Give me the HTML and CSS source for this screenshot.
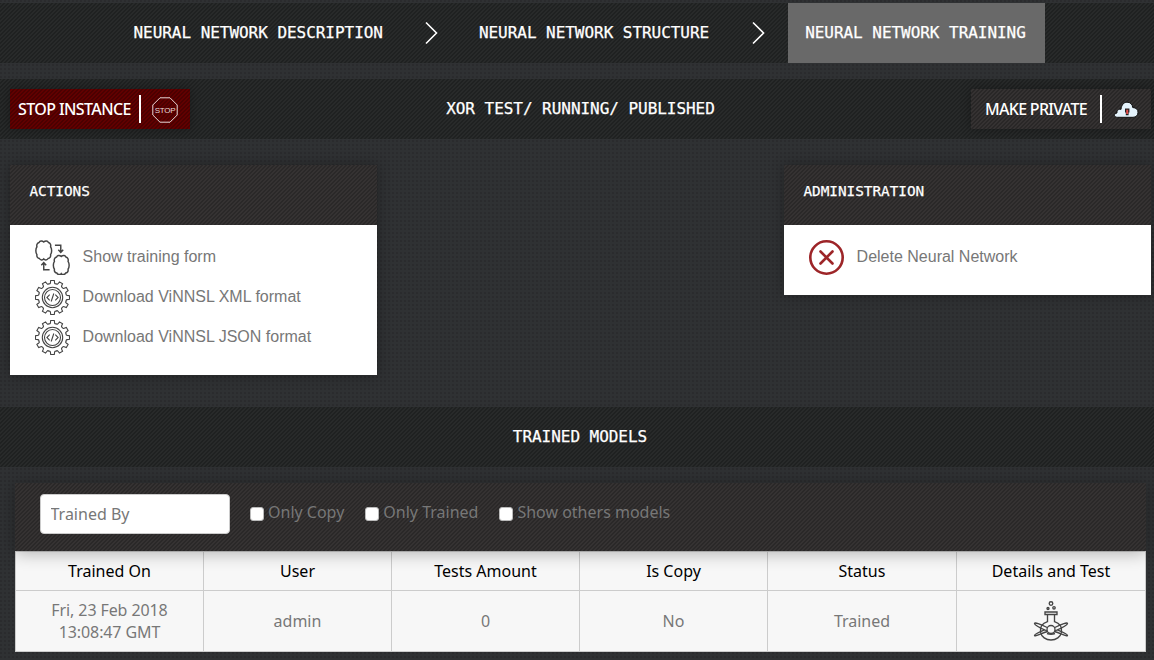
FILE: index.html
```html
<!DOCTYPE html>
<html lang="en">
<head>
<meta charset="utf-8">
<title>Neural Network Training</title>
<link rel="stylesheet" href="styles.css">
</head>
<body>
<svg width="0" height="0" class="defs">
  <defs>
    <path id="tooth" d="M-3.75-13.9Q-2.4-13-2.1-14.7L-1.8-17H1.8L2.1-14.7Q2.4-13 3.75-13.9"/>
    <g id="gear">
      <use href="#tooth"/><use href="#tooth" transform="rotate(30)"/><use href="#tooth" transform="rotate(60)"/>
      <use href="#tooth" transform="rotate(90)"/><use href="#tooth" transform="rotate(120)"/><use href="#tooth" transform="rotate(150)"/>
      <use href="#tooth" transform="rotate(180)"/><use href="#tooth" transform="rotate(210)"/><use href="#tooth" transform="rotate(240)"/>
      <use href="#tooth" transform="rotate(270)"/><use href="#tooth" transform="rotate(300)"/><use href="#tooth" transform="rotate(330)"/>
      <circle r="10.2"/><circle r="8"/>
      <path d="M-2.8-2.8L-5.6 0l2.8 2.8M2.8-2.8L5.6 0 2.8 2.8M1.3-4L-1.3 4"/>
    </g>
    <path id="brain" d="M9 2C7.5.6 5 .6 4.200 2.500 2 3 1.500 5.500 2 7 .5 9 .5 13 2 15 1.500 17.500 3 19 4.500 19 5.500 21 8 21 9 19.500 10 21 12.500 21 13.500 19 15 19 16.500 17.500 16 15 17.500 13 17.500 9 16 7 16.500 5.500 16 3 13.800 2.500 13 .6 10.500.6 9 2Z"/>
  </defs>
</svg>
<nav class="bar steps">
  <a class="step">NEURAL NETWORK DESCRIPTION</a>
  <svg class="arrow" viewBox="0 0 13 24"><path d="M1 1.500L11.500 12 1 22.500"/></svg>
  <a class="step">NEURAL NETWORK STRUCTURE</a>
  <svg class="arrow" viewBox="0 0 13 24"><path d="M1 1.500L11.500 12 1 22.500"/></svg>
  <a class="step active">NEURAL NETWORK TRAINING</a>
</nav>
<header class="bar status">
  <button class="btn stop"><span class="label">STOP INSTANCE</span>
    <svg width="26" height="26" viewBox="0 0 26 26"><path class="octagon" d="M8 .8h10L25.200 8v10L18 25.200H8L.8 18V8Z"/><text x="13" y="15.900">STOP</text></svg>
  </button>
  <h1 class="title">XOR TEST/ RUNNING/ PUBLISHED</h1>
  <button class="btn private"><span class="label">MAKE PRIVATE</span>
    <svg width="26" height="18" viewBox="0 0 26 18"><path class="cloud" d="M4.500 16.300C.5 16.300.5 12.500 4 12 3.500 9.500 6 7.500 8 8.500 8.500 3.500 11 1.200 14 1.200c3.500 0 5.500 2.300 5.700 5.300 3.500.2 5.300 2 5.300 4.700 0 3-2 5.100-5 5.100Z"/><path class="lock" d="M12 7.500h4.400v4h-.8v2.700h-2.800v-2.700H12Z"/><path class="slot" d="M14.200 8.700v4.300"/></svg>
  </button>
</header>
<main>
  <div class="panels">
    <section class="panel">
      <h2 class="panel-title">ACTIONS</h2>
      <ul class="list">
        <li><svg class="icon brains" viewBox="0 0 36 36"><use href="#brain"/><use href="#brain" x="18" y="15"/><path d="M20.500 5.500h6v7M24 10l2.500 2.800L29 10M15 30.500H9v-7M6.500 26 9 23.200l2.500 2.800"/></svg>Show training form</li>
        <li><svg class="icon fine" viewBox="-17.5 -17.5 35 35"><use href="#gear"/></svg>Download ViNNSL XML format</li>
        <li><svg class="icon fine" viewBox="-17.5 -17.5 35 35"><use href="#gear"/></svg>Download ViNNSL JSON format</li>
      </ul>
    </section>
    <section class="panel">
      <h2 class="panel-title">ADMINISTRATION</h2>
      <ul class="list">
        <li><svg class="icon delete" viewBox="0 0 35 35"><circle cx="17.500" cy="17.500" r="16.200"/><path d="M11.500 11.500l12 12M23.500 11.500l-12 12"/></svg>Delete Neural Network</li>
      </ul>
    </section>
  </div>
  <div class="bar section"><h1 class="title">TRAINED MODELS</h1></div>
  <section class="models">
    <form class="filters">
      <input class="field" type="text" placeholder="Trained By">
      <label class="check"><span class="box"></span>Only Copy</label>
      <label class="check"><span class="box"></span>Only Trained</label>
      <label class="check"><span class="box"></span>Show others models</label>
    </form>
    <table class="table">
      <colgroup><col class="col" span="4"><col class="col wide"><col></colgroup>
      <thead><tr><th>Trained On</th><th>User</th><th>Tests Amount</th><th>Is Copy</th><th>Status</th><th>Details and Test</th></tr></thead>
      <tbody><tr><td class="date">Fri, 23 Feb 2018<br>13:08:47 GMT</td><td>admin</td><td>0</td><td>No</td><td>Trained</td>
        <td><svg class="flask" width="36" height="42" viewBox="0 0 36 42"><circle cx="18" cy="3.500" r="1.800"/><circle cx="15" cy="8.500" r="1"/><circle cx="21" cy="7.800" r="1.200"/><path d="M12 12h12v2.500H12ZM14.500 14.500v7.200C8.500 23.500 7 28 7.500 32c.8 5 5.500 8 10.500 8s9.700-3 10.500-8c.5-4-1-8.500-7-10.300v-7.200"/><circle cx="18" cy="29.500" r="4"/><path d="M14.200 31C7 28 1.500 25 1.500 23.500S7 24 14.200 27.500M21.800 31C29 28 34.500 25 34.500 23.500S29 24 21.800 27.500M14.500 31.500C7 34 1.500 37 1.500 35.500s4-3 10-5.500M21.500 31.500c7.500 2.500 13 5.500 13 4s-4-3-10-5.500M14 33.500q4 1.500 8 0"/></svg></td></tr></tbody>
    </table>
  </section>
</main>
</body>
</html>
```
FILE: styles.css
```css
* { box-sizing: border-box; }
body {
  margin: 0;
  padding-top: 3px;
  height: 660px;
  overflow: hidden;
  background: radial-gradient(circle at 1px 1px, #28292b 0.6px, transparent 1px) 0 0 / 4px 4px, #2f3133;
  color: #777;
  font: 16px/22px "Noto Sans", "Open Sans", sans-serif;
}
.defs { position: absolute; }
.bar {
  height: 60px;
  display: flex;
  align-items: center;
  background: repeating-linear-gradient(135deg, #1f2121 0 1.400px, #282a2a 1.400px 2.828px);
}
.step, .title, .panel-title {
  margin: 0;
  color: #fff;
  font: 16px/22px "DejaVu Sans Mono", monospace;
  letter-spacing: -0.040px;
  -webkit-text-stroke: 0.250px #fff;
  white-space: pre;
}
.steps { padding-left: 116px; }
.step { height: 60px; padding: 19px 17.500px; line-height: 22px; }
.step.active { width: 257px; background: #696969; }
.arrow {
  width: 13px;
  height: 24px;
  margin: 0 23px 0 25px;
  fill: none;
  stroke: #fff;
  stroke-width: 1.600;
}
.status {
  margin-top: 16px;
  padding: 0 3px 0 10px;
  justify-content: space-between;
}
.btn {
  width: 180px;
  height: 40px;
  padding: 0;
  border: 0;
  display: flex;
  align-items: center;
  color: #fff;
  font: 500 16px/28px "Noto Sans", sans-serif;
  letter-spacing: -0.600px;
  box-shadow: 0 0 10px rgba(0, 0, 0, 0.3);
}
.btn svg { flex: none; }
.label { border-right: 2px solid #fff; white-space: nowrap; }
.stop { background: repeating-linear-gradient(135deg, #4b0000 0 1.400px, #610000 1.400px 2.828px); padding-left: 8px; }
.stop .label { width: 123px; text-align: left; }
.stop svg { margin: 2px 0 0 11px; }
.octagon { fill: none; stroke: #e8d8d8; }
.stop text { fill: #e8d8d8; font: 8px "Liberation Sans", sans-serif; text-anchor: middle; letter-spacing: -0.300px; }
.private { background: repeating-linear-gradient(135deg, #292727 0 1.400px, #353232 1.400px 2.828px); padding-left: 14px; letter-spacing: -0.700px; }
.private .label { width: 117px; text-align: left; }
.private svg { margin: 2px 0 0 11px; }
.cloud { fill: #e4f2fb; stroke: #111; }
.lock { fill: #222; }
.slot { stroke: #e34b4b; stroke-width: 2; }
.panels {
  height: 268px;
  padding: 26px 3px 0 10px;
  display: flex;
  justify-content: space-between;
  align-items: flex-start;
}
.panel { width: 367px; box-shadow: 0 0 12px rgba(0, 0, 0, 0.3); }
.panel-title, .filters { background: repeating-linear-gradient(135deg, #2a2828 0 1.400px, #353232 1.400px 2.828px); }
.panel-title { height: 60px; padding: 15px 19.500px; font-size: 14.400px; }
.list {
  margin: 0;
  padding: 12px 24px 18px;
  list-style: none;
  background: #fff;
  font: 16px/40px "Liberation Sans", Arial, sans-serif;
}
.list li { height: 40px; display: flex; line-height: 39px; }
.icon {
  width: 35px;
  height: 35px;
  margin: 3px 12.600px 0 1px;
  fill: none;
  stroke: #444;
  stroke-width: 1.300;
}
.icon.brains { stroke-width: 1.500; }
.icon.fine { stroke-width: 1.100; }
.icon.delete { stroke: #9d2528; stroke-width: 2.600; stroke-linecap: round; }
.section { justify-content: center; padding-left: 6px; }
.models { margin: 16px 8px 0 15px; }
.filters {
  height: 68px;
  padding: 11px 25px 0;
  display: flex;
  position: relative;
  box-shadow: 0 2px 16px rgba(0, 0, 0, 0.3);
}
.field {
  width: 190px;
  height: 40px;
  margin-right: 20px;
  padding: 0 9.500px;
  border: 1px solid #ccc;
  border-radius: 4px;
  color: #777;
  font: 16px "Noto Sans", sans-serif;
}
.field::placeholder { color: #777; opacity: 1; }
.check { height: 36px; display: flex; align-items: center; margin-right: 21px; }
.box {
  width: 14px;
  height: 14px;
  margin: 4px 4px 0 0;
  border: 1px solid #bbb;
  border-radius: 3px;
  background: #fff;
}
.table {
  width: 100%;
  border-collapse: collapse;
  table-layout: fixed;
  background: #f7f7f7;
  text-align: center;
}
.col { width: 188px; }
.col.wide { width: 189px; }
.table th, .table td { border: 1px solid #ccc; padding: 0; }
.table th { height: 39px; color: #000; font-weight: 400; }
.table td { height: 61px; }
.table .date { letter-spacing: -0.100px; }
.flask { display: block; margin: 0 auto; fill: none; stroke: #444; stroke-width: 1.350; }
```
